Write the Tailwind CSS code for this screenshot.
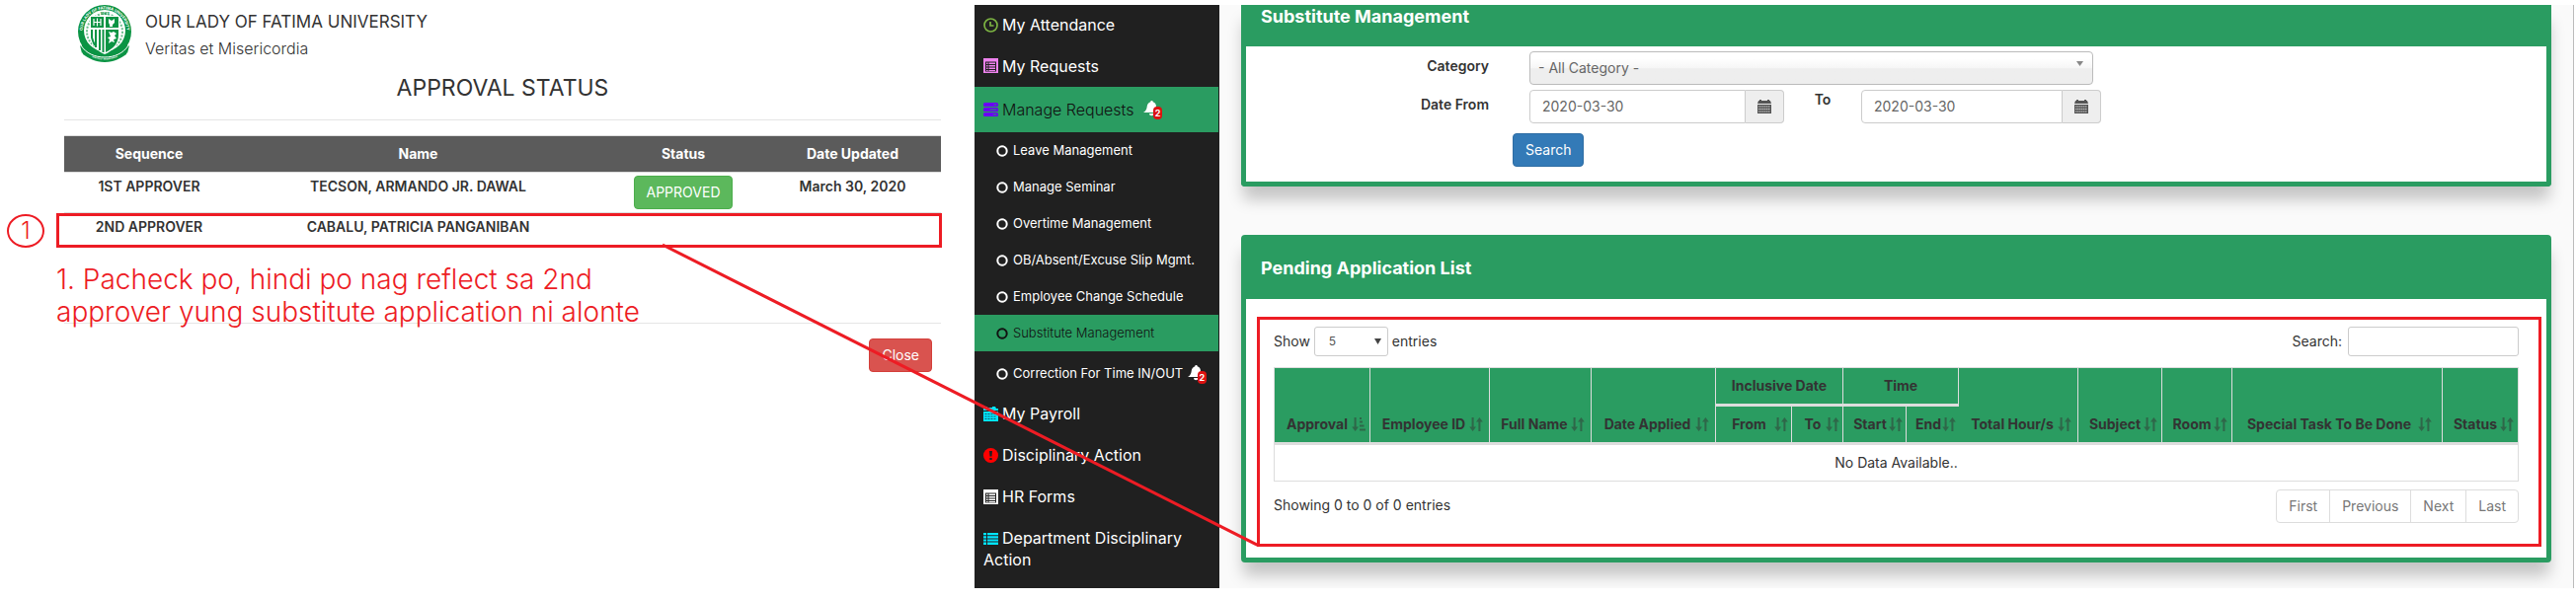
<!DOCTYPE html>
<html lang="en">
<head>
<meta charset="utf-8">
<title>Approval Status</title>
<script src="https://cdn.jsdelivr.net/npm/@tailwindcss/browser@4"></script>
</head>
<body class="bg-white font-['Inter','Liberation_Sans',sans-serif] text-sm leading-5 text-[#333]">
<svg class="hidden">
  <symbol id="sort" viewBox="0 0 14 14"><path d="M2.600 0h2v9.500H7L3.600 14 .200 9.500h2.400zM9.400 14h2V4.500h2.400L10.400 0 7 4.500h2.400z"/></symbol>
  <symbol id="sort-asc" viewBox="0 0 14 14"><path d="M2.600 0h2v9.500H7L3.600 14 .200 9.500h2.400zM8 0h2v2H8zM8 3.500h3v2H8zM8 7.500h4.500v2H8zM8 11.500h6v2H8z"/></symbol>
  <symbol id="cal" viewBox="0 0 14 14"><path d="M1 1h1V0h2v1h6V0h2v1h1l1 3H0zM0 5h14v9H0z"/><path d="M1 7h12M1 9.500h12M1 12h12" stroke="#eee" stroke-width=".800" stroke-dasharray="1.500 .500"/></symbol>
  <symbol id="list" viewBox="0 0 15 15"><path fill-rule="evenodd" d="M0 0h15v15H0zM2 3.500v10h11v-10z"/><path d="M3 4.500h1.500V6H3zm2.500 0H12V6H5.500zM3 7h1.500v1.500H3zm2.500 0H12v1.500H5.500zM3 9.500h1.500V11H3zm2.500 0H12V11H5.500zM3 12h1.500v1H3zm2.500 0H12v1H5.500z"/></symbol>
  <symbol id="ring" viewBox="0 0 12 12"><circle cx="6" cy="6" r="4.700" fill="none" stroke="currentColor" stroke-width="2"/></symbol>
  <symbol id="bell" viewBox="0 0 16 16"><path d="M8.500 0c.800 0 1.200.500 1.200 1.200 2.300.600 3.300 2.600 3.300 5 0 3 .800 4.600 2.500 5.800H0c2.300-1.300 3.400-3.200 3.700-6 .300-2.600 1.500-4.200 3.600-4.800C7.300.500 7.700 0 8.500 0zM6 13h4.500a2.200 2.200 0 0 1-4.500 0z"/></symbol>
</svg>

<div class="relative flex items-start">
  <!-- Approval status dialog -->
  <section class="flex-[987] pl-[65px] pr-[34px]">
    <header class="flex h-[68px] gap-[14px] pl-[14px] pt-1">
      <svg class="h-[59px] w-[54px] shrink-0" viewBox="0 0 54 59" role="img" aria-label="University seal">
        <path d="M2 42 8 46 4 50zM52 42l-6 4 4 4z" fill="#0b9444"/>
        <circle cx="27" cy="28" r="27" fill="#0b9444"/>
        <path d="M3 42h48l-2 9c-6 4-12 8-22 8S11 55 5 51z" fill="#0b9444"/>
        <circle cx="27" cy="27" r="21" fill="#fff"/>
        <circle cx="27" cy="28" r="18" fill="none" stroke="#0b9444" stroke-width="2" stroke-dasharray="2 1.500" opacity=".6"/>
        <path d="M12 12h30v18c0 11-6 17-15 21-9-4-15-10-15-21z" fill="#fff"/>
        <path d="M13 13h13v11H13zM28 13h13v11H28zM28 26h13v5c0 9-5 14-13 18z" fill="#0b9444"/>
        <path d="M14 26v8c1 4 2 6 3 8M18 26v18M22 26v21M25.500 26v23" stroke="#0b9444" stroke-width="2" fill="none"/>
        <path d="M19.500 14.500v8M15.500 18.500h8M16 15v7M23 15v7" stroke="#fff" stroke-width="1.200"/>
        <path d="M31 15l3 2 3-2v4l-2 2v2h-3v-2l-1-2zM31 28l3 1 2-1 3 2-2 2 2 3-3 1 1 3-3-1-3 2 1-4-2-2 3-1z" fill="#fff"/>
        <path d="M3 42c5 8 14 12 24 12s19-4 24-12" stroke="#fff" fill="none" stroke-width="1"/>
        <path id="arc-top" d="M6 36A22.500 22.500 0 1 1 48 36" fill="none"/>
        <path id="arc-bottom" d="M11 52c9 6 23 6 32 0" fill="none"/>
        <text class="text-[4px] font-bold" fill="#fff" text-anchor="middle"><textPath href="#arc-top" startOffset="50%">OUR LADY OF FATIMA UNIVERSITY</textPath></text>
        <text class="text-[2px] font-bold" fill="#fff" text-anchor="middle"><textPath href="#arc-bottom" startOffset="50%">VERITAS ET MISERICORDIA</textPath></text>
        <text x="27" y="11" text-anchor="middle" class="text-[4px] font-bold" fill="#0b9444">1967</text>
      </svg>
      <div class="pt-1">
        <p class="text-[17px] leading-7">OUR LADY OF FATIMA UNIVERSITY</p>
        <p class="text-base leading-[26px] font-light">Veritas et Misericordia</p>
      </div>
    </header>
    <h1 class="h-[53px] pt-[3px] text-center text-[23px] leading-9">APPROVAL STATUS</h1>
    <hr class="mb-[15px] border-[#e5e5e5]">
    <div class="relative">
      <table class="w-full table-fixed text-center font-bold">
        <colgroup><col class="w-[172px]"><col class="w-[373px]"><col class="w-[164px]"><col class="w-[179px]"></colgroup>
        <thead class="bg-[#5b5b5b] text-white">
          <tr class="h-[37px] border-y border-[#ddd]"><th>Sequence</th><th>Name</th><th>Status</th><th>Date Updated</th></tr>
        </thead>
        <tbody>
          <tr class="h-[41px] border-b border-[#ddd] align-top font-semibold">
            <td class="pt-1">1ST APPROVER</td><td class="pt-1">TECSON, ARMANDO JR. DAWAL</td>
            <td class="pt-[3px]"><button class="h-[34px] rounded border border-[#4cae4c] bg-[#5cb85c] px-3 font-normal text-white">APPROVED</button></td>
            <td class="pt-1">March 30, 2020</td>
          </tr>
          <tr class="h-[35px] align-top font-semibold">
            <td class="pt-1">2ND APPROVER</td><td class="pt-1">CABALU, PATRICIA PANGANIBAN</td><td></td><td></td>
          </tr>
        </tbody>
      </table>
      <div class="absolute -left-2 -right-px bottom-0 h-[35px] border-[3px] border-[#ed1c24]"></div>
      <div class="absolute -left-[58px] bottom-0 flex h-[34px] w-[38px] items-center justify-center rounded-[50%] border-2 border-[#ed1c24] text-2xl font-light text-[#ed1c24]">1</div>
      <p class="absolute -left-2 top-[130px] whitespace-nowrap text-[28px] leading-[33px] font-light text-[#ed1c24]">1. Pacheck po, hindi po nag reflect sa 2nd<br>approver yung substitute application ni alonte</p>
    </div>
    <footer class="mt-[76px] border-t border-[#e5e5e5] pr-[9px] pt-[15px] text-right">
      <button class="h-[34px] rounded border border-[#d43f3a] bg-[#d9534f] px-3 text-white">Close</button>
    </footer>
  </section>

  <div class="flex flex-[1622] pr-[2px] pt-[5px]">
    <!-- Sidebar -->
    <nav class="w-[248px] shrink-0 bg-[#202020] pr-px text-base text-white">
      <a href="#" class="flex h-10 items-center gap-1 pl-[9px]"><svg class="size-[15px]" viewBox="0 0 15 15" fill="none" stroke="#7cb342" stroke-width="1.700"><circle cx="7.500" cy="7.500" r="6.500"/><path d="M7 4v4h3.500"/></svg>My Attendance</a>
      <a href="#" class="flex h-[43px] items-center gap-1 pl-[9px]"><svg class="size-[15px] text-[#ee82ee]" fill="currentColor"><use href="#list"/></svg>My Requests</a>
      <a href="#" class="flex h-[46px] items-center gap-1 bg-[#2a9c61] pl-[9px] font-light text-[#111]"><svg class="h-[14px] w-[15px]" viewBox="0 0 15 14"><g fill="#6a00f4"><rect width="15" height="4" rx="1.500"/><rect y="5" width="15" height="4" rx="1.500"/><rect y="10" width="15" height="4" rx="1.500"/></g><path d="M11 2h2.500M7 7h6.500M10 12h3.500" stroke="#2a9c61"/></svg>Manage Requests
        <span class="relative ml-[6px] h-[18px] w-[18px]"><svg class="size-4 text-white" fill="currentColor"><use href="#bell"/></svg><span class="absolute -bottom-px -right-px h-[13px] rounded-sm bg-[#dd1111] px-[2px] text-[9px] leading-[13px] font-bold text-white">2</span></span></a>
      <div class="text-[13px]">
        <a href="#" class="flex h-[37px] items-center gap-[5px] pl-[22px]"><svg class="size-3"><use href="#ring"/></svg>Leave Management</a>
        <a href="#" class="flex h-[37px] items-center gap-[5px] pl-[22px]"><svg class="size-3"><use href="#ring"/></svg>Manage Seminar</a>
        <a href="#" class="flex h-[37px] items-center gap-[5px] pl-[22px]"><svg class="size-3"><use href="#ring"/></svg>Overtime Management</a>
        <a href="#" class="flex h-[37px] items-center gap-[5px] pl-[22px]"><svg class="size-3"><use href="#ring"/></svg>OB/Absent/Excuse Slip Mgmt.</a>
        <a href="#" class="flex h-[37px] items-center gap-[5px] pl-[22px]"><svg class="size-3"><use href="#ring"/></svg>Employee Change Schedule</a>
        <a href="#" class="flex h-[37px] items-center gap-[5px] bg-[#2a9c61] pl-[22px] font-light text-[#111]"><svg class="size-3"><use href="#ring"/></svg>Substitute Management</a>
        <a href="#" class="flex h-[42px] items-center gap-[5px] pl-[22px] pt-[3px] whitespace-nowrap"><svg class="size-3 shrink-0"><use href="#ring"/></svg>Correction For Time IN/OUT
          <span class="relative h-[18px] w-[18px]"><svg class="size-4" fill="currentColor"><use href="#bell"/></svg><span class="absolute -bottom-px -right-px h-[13px] rounded-sm bg-[#dd1111] px-[2px] text-[9px] leading-[13px] font-bold">2</span></span></a>
      </div>
      <a href="#" class="flex h-[42px] items-center gap-1 pl-[9px]"><svg class="size-[15px]" viewBox="0 0 15 15"><path d="M0 4V2h2V0h2v1h5V0h3l1 2h2v2zM0 5h15v10H0z" fill="#00e5ff"/><path d="M1.500 7.500h12M1.500 10h12M1.500 12.500h12" stroke="#202020" stroke-width=".700" stroke-dasharray="2 1"/></svg>My Payroll</a>
      <a href="#" class="flex h-[42px] items-center gap-1 pl-[9px]"><svg class="size-[15px]" viewBox="0 0 15 15"><circle cx="7.500" cy="7.500" r="7.500" fill="#f00"/><path d="M6 3h3l-.500 5.500h-2zM6.300 10h2.400v2H6.300z" fill="#202020"/></svg>Disciplinary Action</a>
      <a href="#" class="flex h-[42px] items-center gap-1 pl-[9px]"><svg class="size-[15px]" fill="currentColor"><use href="#list"/></svg>HR Forms</a>
      <a href="#" class="block pb-[18px] pl-[9px] pt-[10px] leading-[22px]"><svg class="mr-1 inline-block h-3 w-[15px] align-[-1px]" viewBox="0 0 15 12"><path d="M0 0h3v2.200H0zM4 0h11v2.200H4zM0 3.200h3v2.200H0zM4 3.200h11v2.200H4zM0 6.400h3v2.200H0zM4 6.400h11v2.200H4zM0 9.600h3V12H0zM4 9.600h11V12H4z" fill="#00e5ff"/></svg>Department Disciplinary Action</a>
    </nav>

    <!-- Content -->
    <main class="min-w-0 flex-1 overflow-hidden border-r border-[#bbb] bg-[#fafafa] pb-[26px] pl-[22px] pr-[22px]">
      <section class="rounded-b border-x-[5px] border-b-[5px] border-[#2a9c61] bg-white shadow-[0_15px_16px_-2px_rgba(0,0,0,0.220)]">
        <h2 class="h-[42px] bg-[#2a9c61] pl-[15px] text-lg leading-6 font-bold text-white">Substitute Management</h2>
        <form class="grid grid-cols-[287fr_258fr_78fr_243fr_451fr] gap-y-[5px] pb-[15px] pt-[5px]">
          <label for="category" class="pr-[41px] pt-[5px] text-right font-semibold">Category</label>
          <div class="relative col-span-3 mr-2">
            <select id="category" class="h-[34px] w-full appearance-none rounded border border-[#bbb] bg-linear-to-b from-white from-20% via-[#f6f6f6] via-50% to-[#eee] to-52% px-2 text-[#666]"><option>- All Category -</option></select>
            <svg class="pointer-events-none absolute right-[10px] top-[10px] h-[5px] w-[7px]" viewBox="0 0 7 5"><path d="M0 0h7L3.500 5z" fill="#888"/></svg>
          </div>
          <label for="from" class="col-start-1 pr-[41px] pt-[5px] text-right font-semibold">Date From</label>
          <div class="flex h-[34px] min-w-0"><input id="from" value="2020-03-30" class="min-w-0 flex-1 rounded-l border border-[#ccc] px-3 text-[#666]"><button type="button" aria-label="Pick start date" class="flex w-[39px] items-center justify-center rounded-r border border-l-0 border-[#ccc] bg-[#eee]"><svg class="size-[14px]" fill="#555"><use href="#cal"/></svg></button></div>
          <label for="to" class="text-center font-semibold">To</label>
          <div class="flex h-[34px] min-w-0"><input id="to" value="2020-03-30" class="min-w-0 flex-1 rounded-l border border-[#ccc] px-3 text-[#666]"><button type="button" aria-label="Pick end date" class="flex w-[39px] items-center justify-center rounded-r border border-l-0 border-[#ccc] bg-[#eee]"><svg class="size-[14px]" fill="#555"><use href="#cal"/></svg></button></div>
          <div class="col-span-5 col-start-1 pl-[270px] pt-[5px]"><button type="button" class="h-[34px] rounded border border-[#2e6da4] bg-[#337ab7] px-3 text-white">Search</button></div>
        </form>
      </section>

      <section class="mt-[49px] rounded border-[5px] border-[#2a9c61] bg-white shadow-[0_15px_16px_-2px_rgba(0,0,0,0.220)]">
        <h2 class="h-[60px] bg-[#2a9c61] pl-[15px] text-lg leading-[58px] font-bold text-white">Pending Application List</h2>
        <div class="mb-[11px] ml-[11px] mr-[5px] mt-[18px] border-[3px] border-[#ed1c24] pb-[21px] pl-[14px] pr-5 pt-[7px]">
          <div class="mb-[11px] flex items-center justify-between">
            <label class="flex items-center gap-1">Show
              <span class="relative"><select class="h-[30px] w-[75px] appearance-none rounded-[3px] border border-[#ccc] pl-[14px] text-xs text-[#555]"><option>5</option></select><svg class="pointer-events-none absolute right-[7px] top-[12px] h-[6px] w-[7px]" viewBox="0 0 7 6"><path d="M0 0h7L3.500 6z" fill="#444"/></svg></span>
              entries</label>
            <label class="flex items-center gap-[6px]">Search: <input class="h-[30px] w-[173px] rounded-[3px] border border-[#ccc] px-2"></label>
          </div>
          <table class="w-full table-fixed border-separate border-spacing-0 border-l border-t border-[#ddd] text-center">
            <colgroup><col class="w-[97px]"><col class="w-[121px]"><col class="w-[103px]"><col class="w-[126px]"><col class="w-[77px]"><col class="w-[52px]"><col class="w-[64px]"><col class="w-[53px]"><col class="w-[121px]"><col class="w-[85px]"><col class="w-[71px]"><col class="w-[213px]"><col class="w-[77px]"></colgroup>
            <thead class="bg-[#2a9c61] font-bold whitespace-nowrap">
              <tr class="h-[39px]">
                <th rowspan="2" class="border-b-[3px] border-r border-[#ddd] pb-2 pl-2 pr-1 align-bottom"><span class="flex items-center"><span class="flex-1">Approval</span><svg class="size-[14px] shrink-0" fill="#333" opacity=".5"><use href="#sort-asc"/></svg></span></th>
                <th rowspan="2" class="border-b-[3px] border-r border-[#ddd] pb-2 pl-2 pr-[6px] align-bottom"><span class="flex items-center"><span class="flex-1">Employee ID</span><svg class="size-[14px] shrink-0" fill="#333" opacity=".5"><use href="#sort"/></svg></span></th>
                <th rowspan="2" class="border-b-[3px] border-r border-[#ddd] pb-2 pl-2 pr-[6px] align-bottom"><span class="flex items-center"><span class="flex-1">Full Name</span><svg class="size-[14px] shrink-0" fill="#333" opacity=".5"><use href="#sort"/></svg></span></th>
                <th rowspan="2" class="border-b-[3px] border-r border-[#ddd] pb-2 pl-2 pr-[6px] align-bottom"><span class="flex items-center"><span class="flex-1">Date Applied</span><svg class="size-[14px] shrink-0" fill="#333" opacity=".5"><use href="#sort"/></svg></span></th>
                <th colspan="2" class="border-b-[3px] border-r border-[#ddd]">Inclusive Date</th>
                <th colspan="2" class="border-b-[3px] border-r border-[#ddd]">Time</th>
                <th rowspan="2" class="border-b-[3px] border-r border-[#ddd] pb-2 pl-2 pr-[6px] align-bottom"><span class="flex items-center"><span class="flex-1">Total Hour/s</span><svg class="size-[14px] shrink-0" fill="#333" opacity=".5"><use href="#sort"/></svg></span></th>
                <th rowspan="2" class="border-b-[3px] border-r border-[#ddd] pb-2 pl-2 pr-1 align-bottom"><span class="flex items-center"><span class="flex-1">Subject</span><svg class="size-[14px] shrink-0" fill="#333" opacity=".5"><use href="#sort"/></svg></span></th>
                <th rowspan="2" class="border-b-[3px] border-r border-[#ddd] pb-2 pl-2 pr-1 align-bottom"><span class="flex items-center"><span class="flex-1">Room</span><svg class="size-[14px] shrink-0" fill="#333" opacity=".5"><use href="#sort"/></svg></span></th>
                <th rowspan="2" class="border-b-[3px] border-r border-[#ddd] pb-2 pl-2 pr-[10px] align-bottom"><span class="flex items-center"><span class="flex-1">Special Task To Be Done</span><svg class="size-[14px] shrink-0" fill="#333" opacity=".5"><use href="#sort"/></svg></span></th>
                <th rowspan="2" class="border-b-[3px] border-r border-[#ddd] pb-2 pl-2 pr-1 align-bottom"><span class="flex items-center"><span class="flex-1">Status</span><svg class="size-[14px] shrink-0" fill="#333" opacity=".5"><use href="#sort"/></svg></span></th>
              </tr>
              <tr class="h-[39px]">
                <th class="border-b-[3px] border-r border-[#ddd] pb-2 pl-2 pr-[3px] align-bottom"><span class="flex items-center"><span class="flex-1">From</span><svg class="size-[14px] shrink-0" fill="#333" opacity=".5"><use href="#sort"/></svg></span></th>
                <th class="border-b-[3px] border-r border-[#ddd] pb-2 pl-2 pr-[3px] align-bottom"><span class="flex items-center"><span class="flex-1">To</span><svg class="size-[14px] shrink-0" fill="#333" opacity=".5"><use href="#sort"/></svg></span></th>
                <th class="border-b-[3px] border-r border-[#ddd] pb-2 pl-2 pr-[3px] align-bottom"><span class="flex items-center"><span class="flex-1">Start</span><svg class="size-[14px] shrink-0" fill="#333" opacity=".5"><use href="#sort"/></svg></span></th>
                <th class="border-b-[3px] border-[#ddd] pb-2 pl-2 pr-[3px] align-bottom"><span class="flex items-center"><span class="flex-1">End</span><svg class="size-[14px] shrink-0" fill="#333" opacity=".5"><use href="#sort"/></svg></span></th>
              </tr>
            </thead>
            <tbody><tr class="h-[37px]"><td colspan="13" class="border-b border-r border-[#ddd]">No Data Available..</td></tr></tbody>
          </table>
          <div class="mt-2 flex items-start justify-between">
            <p class="pt-[6px]">Showing 0 to 0 of 0 entries</p>
            <div class="flex h-[34px] divide-x divide-[#ddd] rounded border border-[#ddd] text-[#777]">
              <button class="px-3">First</button><button class="px-3">Previous</button><button class="px-3">Next</button><button class="px-3">Last</button>
            </div>
          </div>
        </div>
      </section>
    </main>
  </div>

  <!-- Connector between the two marked areas -->
  <svg class="pointer-events-none absolute left-0 top-0 h-full w-full" viewBox="0 0 2609 596" preserveAspectRatio="none"><path d="M671 248 1275 553" stroke="#ed1c24" stroke-width="3"/></svg>
</div>
</body>
</html>
